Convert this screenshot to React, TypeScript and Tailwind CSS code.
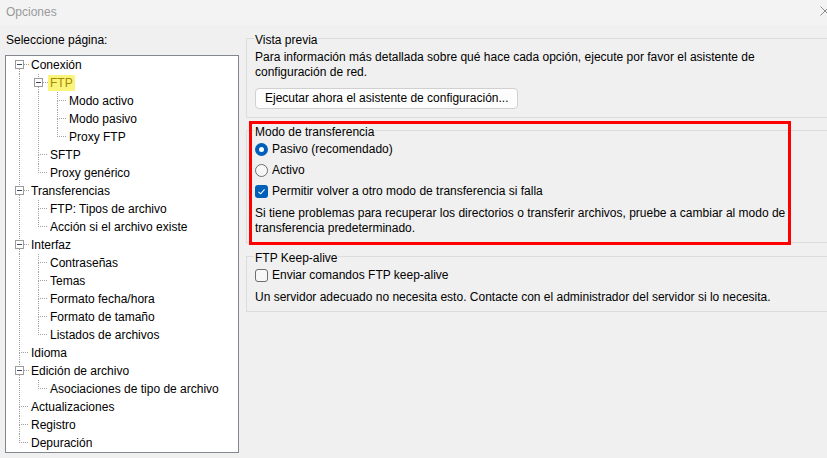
import React from 'react';

type TreeNode = { label: string; children?: TreeNode[]; highlight?: boolean };

const tree: TreeNode[] = [
  {
    label: 'Conexión',
    children: [
      {
        label: 'FTP',
        highlight: true,
        children: [{ label: 'Modo activo' }, { label: 'Modo pasivo' }, { label: 'Proxy FTP' }],
      },
      { label: 'SFTP' },
      { label: 'Proxy genérico' },
    ],
  },
  {
    label: 'Transferencias',
    children: [{ label: 'FTP: Tipos de archivo' }, { label: 'Acción si el archivo existe' }],
  },
  {
    label: 'Interfaz',
    children: [
      { label: 'Contraseñas' },
      { label: 'Temas' },
      { label: 'Formato fecha/hora' },
      { label: 'Formato de tamaño' },
      { label: 'Listados de archivos' },
    ],
  },
  { label: 'Idioma' },
  { label: 'Edición de archivo', children: [{ label: 'Asociaciones de tipo de archivo' }] },
  { label: 'Actualizaciones' },
  { label: 'Registro' },
  { label: 'Depuración' },
];

type FlatRow = { node: TreeNode; guides: boolean[]; first: boolean; last: boolean };

const flatten = (nodes: TreeNode[], guides: boolean[], out: FlatRow[], root: boolean) => {
  nodes.forEach((node, i) => {
    const last = i === nodes.length - 1;
    out.push({ node, guides, first: root && i === 0, last });
    if (node.children) flatten(node.children, [...guides, !last], out, false);
  });
  return out;
};

const rows = flatten(tree, [], [], true);

const DOT = '#a0a0a0';

const TreeRow = ({ row }: { row: FlatRow }) => {
  const hasKids = !!row.node.children;
  return (
    <div className="flex h-[18px] items-center">
      {row.guides.map((g, i) => (
        <svg key={i} width="19" height="18" className="shrink-0">
          {g && <line x1="13.5" y1="0" x2="13.5" y2="18" stroke={DOT} strokeDasharray="1 1" />}
        </svg>
      ))}
      <svg width={row.node.highlight ? 23 : 25} height="18" className="shrink-0">
        {!row.first && <line x1="13.5" y1="0" x2="13.5" y2="9" stroke={DOT} strokeDasharray="1 1" />}
        {!row.last && <line x1="13.5" y1="9" x2="13.5" y2="18" stroke={DOT} strokeDasharray="1 1" />}
        <line x1={hasKids ? 18 : 15} y1="8.5" x2="23" y2="8.5" stroke={DOT} strokeDasharray="1 1" />
        {hasKids && (
          <>
            <rect x="9.5" y="4.5" width="8" height="8" fill="#ffffff" stroke="#9a9a9a" />
            <line x1="11" y1="8.5" x2="16" y2="8.5" stroke="#3c4a66" />
          </>
        )}
      </svg>
      {row.node.highlight ? (
        <span className="bg-[#fbf47a] px-[2px] leading-[16px] text-[#a48a00]">{row.node.label}</span>
      ) : (
        <span className="whitespace-nowrap leading-[15px]">{row.node.label}</span>
      )}
    </div>
  );
};

const Radio = ({ checked, label }: { checked?: boolean; label: string }) => (
  <label className="flex h-[18px] items-center gap-[4px]">
    {checked ? (
      <span className="flex h-[13px] w-[13px] items-center justify-center rounded-full bg-[#005fb8]">
        <span className="h-[5px] w-[5px] rounded-full bg-white" />
      </span>
    ) : (
      <span className="h-[13px] w-[13px] rounded-full border border-[#6e6e6e] bg-[#f7f7f7]" />
    )}
    <span>{label}</span>
  </label>
);

const Check = ({ checked, label }: { checked?: boolean; label: string }) => (
  <label className="flex h-[18px] items-center gap-[4px]">
    {checked ? (
      <span className="flex h-[13px] w-[13px] items-center justify-center rounded-[3px] bg-[#005fb8]">
        <svg width="9" height="9" viewBox="0 0 9 9">
          <path d="M1.5 4.8 L3.6 6.8 L7.6 2.3" fill="none" stroke="#ffffff" strokeWidth="1.1" />
        </svg>
      </span>
    ) : (
      <span className="h-[13px] w-[13px] rounded-[3px] border border-[#6e6e6e] bg-[#f7f7f7]" />
    )}
    <span>{label}</span>
  </label>
);

const Group = ({ title, className, children }: { title: string; className?: string; children: React.ReactNode }) => (
  <fieldset className={`w-[640px] border border-[#dcdcdc] pl-[8px] ${className ?? ''}`}>
    <legend className="-ml-[1px] px-[1px] pt-[4px] leading-[15px]">{title}</legend>
    {children}
  </fieldset>
);

export default function App() {
  return (
    <div
      className="h-[458px] w-[827px] overflow-hidden bg-[#f0f0f0] text-[12px] leading-[15px] text-black"
      style={{ fontFamily: '"Segoe UI", "Liberation Sans", Arial, sans-serif' }}
    >
      {/* Title bar */}
      <div className="flex h-[25px] items-center justify-between overflow-hidden bg-[#f3f3f3] pl-[6px]">
        <span className="text-[#9a9a9a]">Opciones</span>
        <svg width="10" height="10" className="-mr-[3px] mb-[4px] shrink-0">
          <path d="M0.5 0.5 L9.5 9.5 M9.5 0.5 L0.5 9.5" stroke="#8c8c8c" strokeWidth="1" />
        </svg>
      </div>

      <div className="flex">
        {/* Page tree */}
        <div className="w-[239px] shrink-0 pl-[5px]">
          <div className="mt-[8px] pl-[1px]">Seleccione página:</div>
          <div className="mt-[7px] h-[398px] overflow-hidden border border-[#828790] bg-white">
            {rows.map((r, i) => (
              <TreeRow key={i} row={r} />
            ))}
          </div>
        </div>

        {/* Settings */}
        <div className="relative ml-[7px] flex-1 overflow-hidden">
          <Group title="Vista previa" className="mt-[4px] pb-[8px]">
            <p className="pt-[2px]">
              Para información más detallada sobre qué hace cada opción, ejecute por favor el asistente de
              <br />
              configuración de red.
            </p>
            <button className="mt-[8px] h-[21px] rounded-[4px] border border-[#d0d0d0] bg-[#fdfdfd] px-[9px]">
              Ejecutar ahora el asistente de configuración...
            </button>
          </Group>

          <Group title="Modo de transferencia" className="mt-[3px] pb-[6px]">
            <div className="flex flex-col gap-[3px]">
              <Radio checked label="Pasivo (recomendado)" />
              <Radio label="Activo" />
              <Check checked label="Permitir volver a otro modo de transferencia si falla" />
            </div>
            <p className="mt-[6px]">
              Si tiene problemas para recuperar los directorios o transferir archivos, pruebe a cambiar al modo de
              <br />
              transferencia predeterminado.
            </p>
          </Group>

          <Group title="FTP Keep-alive" className="mt-[4px] pb-[6px]">
            <Check label="Enviar comandos FTP keep-alive" />
            <p className="mt-[6px]">
              Un servidor adecuado no necesita esto. Contacte con el administrador del servidor si lo necesita.
            </p>
          </Group>

          {/* highlight annotation */}
          <div className="pointer-events-none absolute left-[3px] top-[96px] h-[124px] w-[542px] border-[3px] border-[#ff0000]" />
        </div>
      </div>
    </div>
  );
}
